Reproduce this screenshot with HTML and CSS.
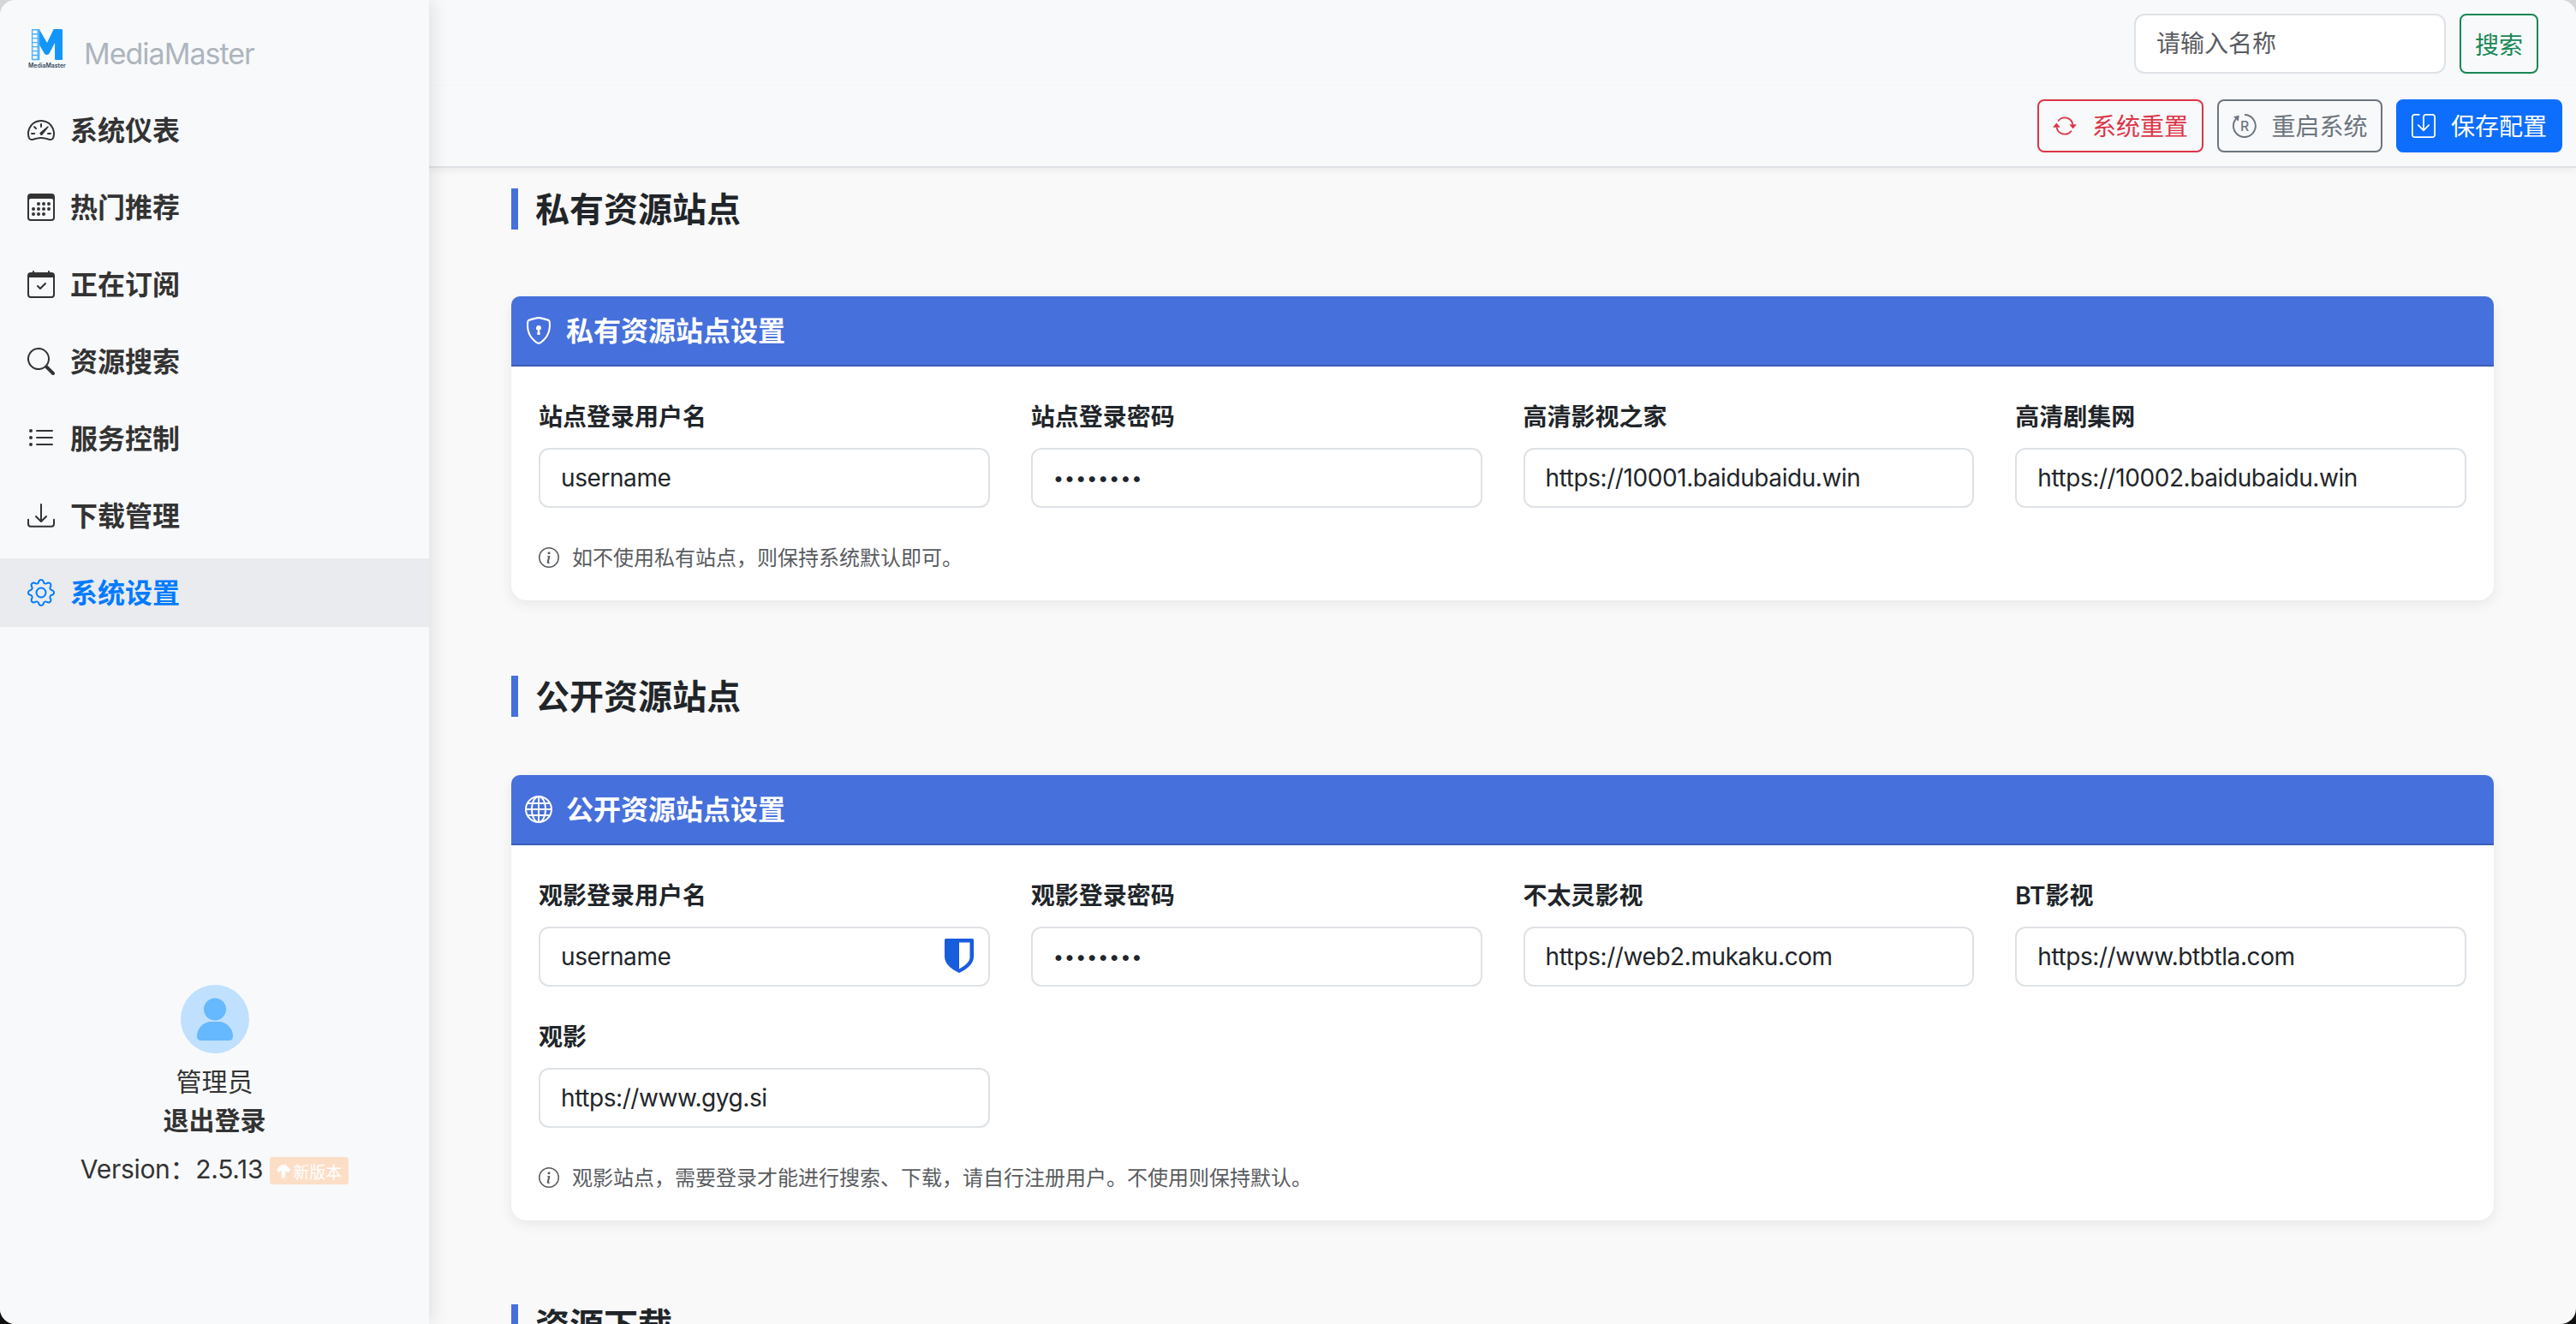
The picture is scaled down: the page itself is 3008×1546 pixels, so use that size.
FILE: index.html
```html
<!DOCTYPE html>
<html lang="zh-CN">
<head>
  <meta charset="UTF-8">
  <meta name="viewport" content="width=device-width, initial-scale=1.0">
  <title>系统设置 - MediaMaster</title>
  <link rel="stylesheet" href="styles.css">
</head>
<body>
  <div class="layout">
    <!-- 侧边栏 -->
    <aside class="sidebar">
      <div class="brand">
        <svg class="brand-logo" viewBox="0 0 48 48">
          <path fill="#1296fb" d="M17 1l8.900 15.300L33.300 1h8.900q1 0 1 1v32.500q0 1-1 1h-6.600q-1 0-1-1V16.300L28.200 28.500q-2.600 2.600-5.200 0L17 18z"/>
          <path fill="none" stroke="#4aaefb" stroke-width="1.300" d="M9.200 1.700H17V35H9.200zM15.500 1.700V35M9.200 6.500h7M9.200 11.200h7M9.200 16h7M9.200 20.700h7M9.200 25.500h7M9.200 30.200h7"/>
          <text class="logo-text" x="4.800" y="44.600" textLength="42" lengthAdjust="spacingAndGlyphs">MediaMaster</text>
        </svg>
        <span class="brand-name">MediaMaster</span>
      </div>
      <nav class="menu">
        <a href="#"><svg class="icon" viewBox="0 0 16 16"><path d="M8 4a.5.5 0 0 1 .5.5V6a.5.5 0 0 1-1 0V4.500A.5.5 0 0 1 8 4M3.732 5.732a.5.5 0 0 1 .707 0l.915.914a.5.5 0 1 1-.708.708l-.914-.915a.5.5 0 0 1 0-.707M2 10a.5.5 0 0 1 .5-.5h1.586a.5.5 0 0 1 0 1H2.500A.5.5 0 0 1 2 10m9.500 0a.5.5 0 0 1 .5-.5h1.500a.5.5 0 0 1 0 1H12a.5.5 0 0 1-.5-.5m.754-4.246a.39.39 0 0 0-.527-.02L7.547 9.310a.91.91 0 1 0 1.302 1.258l3.434-4.297a.39.39 0 0 0-.029-.518z"/><path fill-rule="evenodd" d="M0 10a8 8 0 1 1 15.547 2.661c-.442 1.253-1.845 1.602-2.932 1.250C11.309 13.488 9.475 13 8 13c-1.474 0-3.310.488-4.615.911-1.087.352-2.490.003-2.932-1.250A8 8 0 0 1 0 10m8-7a7 7 0 0 0-6.603 9.329c.203.575.923.876 1.680.630C4.397 12.533 6.358 12 8 12s3.604.532 4.923.960c.757.245 1.477-.056 1.680-.631A7 7 0 0 0 8 3"/></svg><span>系统仪表</span></a>
        <a href="#"><svg class="icon" viewBox="0 0 16 16"><path d="M14 0H2a2 2 0 0 0-2 2v12a2 2 0 0 0 2 2h12a2 2 0 0 0 2-2V2a2 2 0 0 0-2-2M1 3.857C1 3.384 1.448 3 2 3h12c.552 0 1 .384 1 .857v10.286c0 .473-.448.857-1 .857H2c-.552 0-1-.384-1-.857z"/><path d="M6.500 7a1 1 0 1 0 0-2 1 1 0 0 0 0 2m3 0a1 1 0 1 0 0-2 1 1 0 0 0 0 2m3 0a1 1 0 1 0 0-2 1 1 0 0 0 0 2m-9 3a1 1 0 1 0 0-2 1 1 0 0 0 0 2m3 0a1 1 0 1 0 0-2 1 1 0 0 0 0 2m3 0a1 1 0 1 0 0-2 1 1 0 0 0 0 2m3 0a1 1 0 1 0 0-2 1 1 0 0 0 0 2m-9 3a1 1 0 1 0 0-2 1 1 0 0 0 0 2m3 0a1 1 0 1 0 0-2 1 1 0 0 0 0 2m3 0a1 1 0 1 0 0-2 1 1 0 0 0 0 2"/></svg><span>热门推荐</span></a>
        <a href="#"><svg class="icon" viewBox="0 0 16 16"><path d="M10.854 7.146a.5.5 0 0 1 0 .708l-3 3a.5.5 0 0 1-.708 0l-1.500-1.500a.5.5 0 1 1 .708-.708L7.500 9.793l2.646-2.647a.5.5 0 0 1 .708 0"/><path d="M3.500 0a.5.5 0 0 1 .5.5V1h8V.5a.5.5 0 0 1 1 0V1h1a2 2 0 0 1 2 2v11a2 2 0 0 1-2 2H2a2 2 0 0 1-2-2V3a2 2 0 0 1 2-2h1V.5a.5.5 0 0 1 .5-.5M1 4v10a1 1 0 0 0 1 1h12a1 1 0 0 0 1-1V4z"/></svg><span>正在订阅</span></a>
        <a href="#"><svg class="icon" viewBox="0 0 16 16"><path d="M11.742 10.344a6.500 6.500 0 1 0-1.397 1.398h-.001q.044.060.098.115l3.850 3.850a1 1 0 0 0 1.415-1.414l-3.850-3.850a1 1 0 0 0-.115-.1zM12 6.500a5.500 5.500 0 1 1-11 0 5.500 5.500 0 0 1 11 0"/></svg><span>资源搜索</span></a>
        <a href="#"><svg class="icon" viewBox="0 0 16 16"><path fill-rule="evenodd" d="M5 11.500a.5.5 0 0 1 .5-.5h9a.5.5 0 0 1 0 1h-9a.5.5 0 0 1-.5-.5m0-4a.5.5 0 0 1 .5-.5h9a.5.5 0 0 1 0 1h-9a.5.5 0 0 1-.5-.5m0-4a.5.5 0 0 1 .5-.5h9a.5.5 0 0 1 0 1h-9a.5.5 0 0 1-.5-.5m-3 1a1 1 0 1 0 0-2 1 1 0 0 0 0 2m0 4a1 1 0 1 0 0-2 1 1 0 0 0 0 2m0 4a1 1 0 1 0 0-2 1 1 0 0 0 0 2"/></svg><span>服务控制</span></a>
        <a href="#"><svg class="icon" viewBox="0 0 16 16"><path d="M.5 9.900a.5.5 0 0 1 .5.5v2.500a1 1 0 0 0 1 1h12a1 1 0 0 0 1-1v-2.500a.5.5 0 0 1 1 0v2.500a2 2 0 0 1-2 2H2a2 2 0 0 1-2-2v-2.500a.5.5 0 0 1 .5-.5"/><path d="M7.646 11.854a.5.5 0 0 0 .708 0l3-3a.5.5 0 0 0-.708-.708L8.500 10.293V1.500a.5.5 0 0 0-1 0v8.793L5.354 8.146a.5.5 0 1 0-.708.708z"/></svg><span>下载管理</span></a>
        <a href="#" class="active"><svg class="icon" viewBox="0 0 16 16"><path d="M8 4.754a3.246 3.246 0 1 0 0 6.492 3.246 3.246 0 0 0 0-6.492M5.754 8a2.246 2.246 0 1 1 4.492 0 2.246 2.246 0 0 1-4.492 0"/><path d="M9.796 1.343c-.527-1.790-3.065-1.790-3.592 0l-.094.319a.873.873 0 0 1-1.255.520l-.292-.160c-1.640-.892-3.433.902-2.540 2.541l.159.292a.873.873 0 0 1-.520 1.255l-.319.094c-1.790.527-1.790 3.065 0 3.592l.319.094a.873.873 0 0 1 .520 1.255l-.160.292c-.892 1.640.901 3.434 2.541 2.540l.292-.159a.873.873 0 0 1 1.255.520l.094.319c.527 1.790 3.065 1.790 3.592 0l.094-.319a.873.873 0 0 1 1.255-.520l.292.160c1.640.893 3.434-.902 2.540-2.541l-.159-.292a.873.873 0 0 1 .520-1.255l.319-.094c1.790-.527 1.790-3.065 0-3.592l-.319-.094a.873.873 0 0 1-.520-1.255l.160-.292c.893-1.640-.902-3.433-2.541-2.540l-.292.159a.873.873 0 0 1-1.255-.520zm-2.633.283c.246-.835 1.428-.835 1.674 0l.094.319a1.873 1.873 0 0 0 2.693 1.115l.291-.160c.764-.415 1.600.420 1.184 1.185l-.159.292a1.873 1.873 0 0 0 1.116 2.692l.318.094c.835.246.835 1.428 0 1.674l-.319.094a1.873 1.873 0 0 0-1.115 2.693l.160.291c.415.764-.420 1.600-1.185 1.184l-.291-.159a1.873 1.873 0 0 0-2.693 1.116l-.094.318c-.246.835-1.428.835-1.674 0l-.094-.319a1.873 1.873 0 0 0-2.692-1.115l-.292.160c-.764.415-1.600-.420-1.184-1.185l.159-.291A1.873 1.873 0 0 0 1.945 8.930l-.319-.094c-.835-.246-.835-1.428 0-1.674l.319-.094A1.873 1.873 0 0 0 3.060 4.377l-.160-.292c-.415-.764.420-1.600 1.185-1.184l.292.159a1.873 1.873 0 0 0 2.692-1.115z"/></svg><span>系统设置</span></a>
      </nav>
      <div class="user">
        <svg class="avatar" viewBox="0 0 80 80">
          <circle cx="40" cy="40" r="40" fill="#bfe0ff"/>
          <circle cx="40" cy="28.500" r="13" fill="#66b8ff"/>
          <path fill="#66b8ff" d="M36 43h8c10 0 17 8 17 17q0 5-5 5H24q-5 0-5-5c0-9 7-17 17-17z"/>
        </svg>
        <div class="user-name">管理员</div>
        <a href="#" class="logout">退出登录</a>
        <div class="version">
          <span class="version-text">Version：2.5.13</span>
          <span class="badge"><svg class="badge-icon" viewBox="0 0 16 16"><path d="M8 2.500L2 8.500M8 2.500l6 6M8 3v12.500" fill="none" stroke="#fff" stroke-width="4"/></svg>新版本</span>
        </div>
      </div>
    </aside>

    <main class="main">
      <header class="header">
        <form class="search-bar">
          <input type="text" class="form-control search-input" placeholder="请输入名称">
          <button type="button" class="btn btn-search">搜索</button>
        </form>
        <div class="toolbar">
          <button type="button" class="btn btn-danger"><svg class="btn-icon" viewBox="0 0 16 16"><path d="M11.534 7h3.932a.25.25 0 0 1 .192.410l-1.966 2.360a.25.25 0 0 1-.384 0l-1.966-2.360a.25.25 0 0 1 .192-.410m-11 2h3.932a.25.25 0 0 0 .192-.410L2.692 6.230a.25.25 0 0 0-.384 0L.342 8.590A.25.25 0 0 0 .534 9"/><path fill-rule="evenodd" d="M8 3c-1.552 0-2.940.707-3.857 1.818a.5.5 0 1 1-.771-.636A6.002 6.002 0 0 1 13.917 7H12.900A5 5 0 0 0 8 3M3.100 9a5.002 5.002 0 0 0 8.757 2.182.5.5 0 1 1 .771.636A6.002 6.002 0 0 1 2.083 9z"/></svg><span>系统重置</span></button>
          <button type="button" class="btn btn-secondary"><svg class="btn-icon" viewBox="0 0 16 16"><path d="M8 .600A7.400 7.400 0 1 1 2.300 3.200" fill="none" stroke="currentColor" stroke-width="1.100"/><path d="M.600 1.900 4.400 1 3.900 5z"/><text class="icon-letter" x="5.200" y="11.200">R</text></svg><span>重启系统</span></button>
          <button type="button" class="btn btn-primary"><svg class="btn-icon" viewBox="0 0 16 16"><path d="M5 .5H2A1.500 1.500 0 0 0 .5 2v12A1.500 1.500 0 0 0 2 15.500h12a1.500 1.500 0 0 0 1.500-1.500V2A1.500 1.500 0 0 0 14 .5H9.500a1.500 1.500 0 0 0-1.500 1.500v8.800M4.500 7.500 8 11l3.500-3.500" fill="none" stroke="currentColor" stroke-linecap="round"/></svg><span>保存配置</span></button>
        </div>
      </header>

      <div class="content">
        <h2 class="section-title">私有资源站点</h2>
        <section class="card card-private">
          <div class="card-header"><svg class="icon" viewBox="0 0 16 16"><path d="M5.338 1.590a61 61 0 0 0-2.837.856.480.480 0 0 0-.328.390c-.554 4.157.726 7.190 2.253 9.188a10.700 10.700 0 0 0 2.287 2.233c.346.244.652.420.893.533q.180.085.293.118a1 1 0 0 0 .101.025 1 1 0 0 0 .100-.025q.114-.034.294-.118c.240-.113.547-.290.893-.533a10.700 10.700 0 0 0 2.287-2.233c1.527-1.997 2.807-5.031 2.253-9.188a.480.480 0 0 0-.328-.390c-.651-.213-1.750-.560-2.837-.855C9.552 1.290 8.531 1.067 8 1.067c-.530 0-1.552.223-2.662.524zM5.072.560C6.157.265 7.310 0 8 0s1.843.265 2.928.560c1.110.300 2.229.655 2.887.870a1.540 1.540 0 0 1 1.044 1.262c.596 4.477-.787 7.795-2.465 9.990a11.800 11.800 0 0 1-2.517 2.453 7 7 0 0 1-1.048.625c-.280.132-.581.240-.829.240s-.548-.108-.829-.240a7 7 0 0 1-1.048-.625 11.800 11.800 0 0 1-2.517-2.453C1.928 10.487.545 7.169 1.141 2.692A1.540 1.540 0 0 1 2.185 1.430 63 63 0 0 1 5.072.560"/><path d="M9.500 6.500a1.500 1.500 0 0 1-1 1.415l.385 1.990a.5.5 0 0 1-.491.595h-.788a.5.5 0 0 1-.490-.595l.384-1.990a1.500 1.500 0 1 1 2-1.415"/></svg><span>私有资源站点设置</span></div>
          <div class="card-body">
            <div class="form-grid">
              <div class="field"><label class="form-label">站点登录用户名</label><input type="text" class="form-control" value="username"></div>
              <div class="field"><label class="form-label">站点登录密码</label><input type="password" class="form-control" value="password"></div>
              <div class="field"><label class="form-label">高清影视之家</label><input type="text" class="form-control" value="https://10001.baidubaidu.win"></div>
              <div class="field"><label class="form-label">高清剧集网</label><input type="text" class="form-control" value="https://10002.baidubaidu.win"></div>
            </div>
            <div class="form-text"><svg class="info-icon" viewBox="0 0 16 16"><path d="M8 15A7 7 0 1 1 8 1a7 7 0 0 1 0 14m0 1A8 8 0 1 0 8 0a8 8 0 0 0 0 16"/><path d="m8.930 6.588-2.290.287-.082.380.450.083c.294.070.352.176.288.469l-.738 3.468c-.194.897.105 1.319.808 1.319.545 0 1.178-.252 1.465-.598l.088-.416c-.200.176-.492.246-.686.246-.275 0-.375-.193-.304-.533zM9 4.500a1 1 0 1 1-2 0 1 1 0 0 1 2 0"/></svg><span>如不使用私有站点，则保持系统默认即可。</span></div>
          </div>
        </section>

        <h2 class="section-title">公开资源站点</h2>
        <section class="card card-public">
          <div class="card-header"><svg class="icon" viewBox="0 0 16 16"><path d="M0 8a8 8 0 1 1 16 0A8 8 0 0 1 0 8m7.500-6.923c-.670.204-1.335.820-1.887 1.855A8 8 0 0 0 5.145 4H7.500zM4.090 4a9.300 9.300 0 0 1 .640-1.539 7 7 0 0 1 .597-.933A7.030 7.030 0 0 0 2.255 4zm-.582 3.500c.030-.877.138-1.718.312-2.500H1.674a7 7 0 0 0-.656 2.500zM4.847 5a12.500 12.500 0 0 0-.338 2.500H7.500V5zM8.500 5v2.500h2.990a12.500 12.500 0 0 0-.337-2.500zM4.510 8.500a12.500 12.500 0 0 0 .337 2.500H7.500V8.500zm3.990 0V11h2.653c.187-.765.306-1.608.338-2.500zM5.145 12q.208.580.468 1.068c.552 1.035 1.218 1.650 1.887 1.855V12zm.182 2.472a7 7 0 0 1-.597-.933A9.300 9.300 0 0 1 4.090 12H2.255a7 7 0 0 0 3.072 2.472M3.820 11a13.700 13.700 0 0 1-.312-2.500h-2.490c.062.890.291 1.733.656 2.500zm6.853 3.472A7 7 0 0 0 13.745 12H11.910a9.300 9.300 0 0 1-.640 1.539 7 7 0 0 1-.597.933M8.500 12v2.923c.670-.204 1.335-.820 1.887-1.855q.260-.487.468-1.068zm3.680-1h2.146c.365-.767.594-1.610.656-2.500h-2.490a13.700 13.700 0 0 1-.312 2.500m2.802-3.500a7 7 0 0 0-.656-2.500H12.180c.174.782.282 1.623.312 2.500zM11.270 2.461c.247.464.462.980.640 1.539h1.835a7 7 0 0 0-3.072-2.472c.218.284.418.598.597.933M10.855 4a8 8 0 0 0-.468-1.068C9.835 1.897 9.170 1.282 8.500 1.077V4z"/></svg><span>公开资源站点设置</span></div>
          <div class="card-body">
            <div class="form-grid">
              <div class="field"><label class="form-label">观影登录用户名</label><input type="text" class="form-control" value="username"><svg class="shield" viewBox="0 0 34 40"><path fill="#175ddc" d="M1.500 0h31Q34 0 34 1.500V21c0 9-9 15.500-17 19C9 36.500 0 30 0 21V1.500Q0 0 1.500 0z"/><path fill="#fff" d="M17 4.500h12.500V22c0 5-6 10-12.500 13.500z"/></svg></div>
              <div class="field"><label class="form-label">观影登录密码</label><input type="password" class="form-control" value="password"></div>
              <div class="field"><label class="form-label">不太灵影视</label><input type="text" class="form-control" value="https://web2.mukaku.com"></div>
              <div class="field"><label class="form-label">BT影视</label><input type="text" class="form-control" value="https://www.btbtla.com"></div>
              <div class="field"><label class="form-label">观影</label><input type="text" class="form-control" value="https://www.gyg.si"></div>
            </div>
            <div class="form-text"><svg class="info-icon" viewBox="0 0 16 16"><path d="M8 15A7 7 0 1 1 8 1a7 7 0 0 1 0 14m0 1A8 8 0 1 0 8 0a8 8 0 0 0 0 16"/><path d="m8.930 6.588-2.290.287-.082.380.450.083c.294.070.352.176.288.469l-.738 3.468c-.194.897.105 1.319.808 1.319.545 0 1.178-.252 1.465-.598l.088-.416c-.200.176-.492.246-.686.246-.275 0-.375-.193-.304-.533zM9 4.500a1 1 0 1 1-2 0 1 1 0 0 1 2 0"/></svg><span>观影站点，需要登录才能进行搜索、下载，请自行注册用户。不使用则保持默认。</span></div>
          </div>
        </section>

        <h2 class="section-title">资源下载</h2>
      </div>
    </main>
  </div>
</body>
</html>
```
FILE: styles.css
```css
* {
  box-sizing: border-box;
}

html {
  background: linear-gradient(#d5d6d9 50%, #111 50%);
}

body {
  margin: 0;
  height: 1546px;
  overflow: hidden;
  font-family: Inter, "Noto Sans CJK SC", sans-serif;
  font-size: 28px;
  color: #212529;
}

.layout {
  display: flex;
  height: 1546px;
  overflow: hidden;
  background: #f9f9f9;
  border-radius: 18px;
}

svg {
  fill: currentColor;
  flex-shrink: 0;
}

/* 侧边栏 */
.sidebar {
  display: flex;
  flex-direction: column;
  width: 501px;
  flex-shrink: 0;
  background: #f8f9fb;
  box-shadow: 4px 0 20px rgba(0, 0, 0, 0.1);
  z-index: 2;
}

.brand {
  display: flex;
  height: 112px;
  padding: 33px 0 0 28px;
}

.brand-logo {
  width: 50px;
  height: 50px;
}

.logo-text {
  font-size: 7px;
  font-weight: 600;
  fill: #34495e;
}

.brand-name {
  margin-left: 20px;
  font-size: 34px;
  line-height: 60px;
  letter-spacing: -1px;
  color: #adb5bd;
}

.menu {
  display: flex;
  flex-direction: column;
  gap: 10px;
}

.menu a {
  display: flex;
  align-items: center;
  height: 80px;
  padding-left: 32px;
  font-size: 32px;
  font-weight: 600;
  color: #333;
  text-decoration: none;
}

.menu a span,
.card-header span,
.form-text span {
  padding-bottom: 4px;
}

.menu a.active {
  background: #e9ebef;
  color: #007bff;
}

.icon {
  width: 32px;
  height: 32px;
  margin-right: 18px;
}

.user {
  display: flex;
  flex-direction: column;
  align-items: center;
  margin-top: auto;
  height: 396px;
  font-size: 30px;
  color: #333;
}

.avatar {
  width: 80px;
  height: 80px;
  margin-bottom: 11px;
}

.user-name,
.logout {
  line-height: 45px;
}

.logout {
  font-weight: 600;
  color: #333;
  text-decoration: none;
}

.version {
  display: flex;
  align-items: center;
  height: 50px;
  margin-top: 11px;
}

.version-text {
  padding-bottom: 9px;
  letter-spacing: -0.3px;
}

.badge {
  display: flex;
  align-items: center;
  width: 92px;
  height: 32px;
  margin-left: 8px;
  padding-left: 7px;
  border-radius: 3px;
  background: #fcdec7;
  color: #fff;
  font-size: 19px;
}

.badge-icon {
  width: 18px;
  height: 18px;
  margin-right: 2px;
}

/* 顶部 */
.main {
  flex: 1;
  min-width: 0;
}

.header {
  height: 196px;
  background: #f8f9fb;
  border-bottom: 2px solid #dee2e6;
  box-shadow: 0 4px 8px rgba(0, 0, 0, 0.05);
}

.search-bar {
  display: flex;
  justify-content: flex-end;
  gap: 16px;
  height: 100px;
  padding: 16px 44px 0 0;
  border-bottom: 1px solid #f5f6f9;
}

.toolbar {
  display: flex;
  justify-content: flex-end;
  gap: 16px;
  padding: 16px 16px 0 0;
}

.form-control {
  display: block;
  width: 100%;
  height: 70px;
  padding: 0 24px;
  border: 2px solid #dee2e6;
  border-radius: 12px;
  background: #fff;
  color: #212529;
  font-family: inherit;
  font-size: 28px;
  letter-spacing: -0.42px;
}

.form-control[type="password"] {
  font-size: 22px;
  letter-spacing: 0.7px;
}

.form-control::placeholder {
  color: #595c5f;
  letter-spacing: 0;
}

.search-input {
  width: 364px;
}

.btn {
  display: flex;
  align-items: center;
  height: 62px;
  padding: 0 16px;
  border: 2px solid;
  border-radius: 8px;
  background: transparent;
  font-family: inherit;
  font-size: 28px;
}

.btn span {
  padding-bottom: 2px;
}

.btn-icon {
  width: 28px;
  height: 28px;
  margin-right: 17.5px;
}

.icon-letter {
  font-size: 9px;
  font-weight: 500;
}

.btn-search {
  height: 70px;
  color: #198754;
}

.btn-danger {
  color: #dc3545;
}

.btn-secondary {
  color: #6c757d;
}

.btn-primary {
  background: #0d6efd;
  border-color: #0d6efd;
  color: #fff;
}

/* 内容 */
.content {
  padding: 24px 96px 0;
}

.section-title {
  height: 48px;
  margin: 0;
  padding-left: 20px;
  border-left: 8px solid #4670db;
  font-size: 40px;
  font-weight: 600;
  line-height: 50px;
}

.card {
  border-radius: 18px;
  background: #fff;
  box-shadow: 0 4px 16px rgba(0, 0, 0, 0.08);
}

.card-private {
  margin: 78px 0 88px;
}

.card-public {
  margin: 68px 0 98px;
}

.card-header {
  display: flex;
  align-items: center;
  height: 82px;
  padding-left: 16px;
  border-bottom: 2px solid #3b5cb8;
  border-radius: 10px 10px 0 0;
  background: #4670db;
  color: #fff;
  font-size: 32px;
  font-weight: 600;
}

.card-header .icon {
  margin-right: 16px;
}

.card-body {
  padding: 37px 32px 32px;
}

.form-grid {
  display: grid;
  grid-template-columns: repeat(4, 1fr);
  gap: 37px 48px;
}

.field {
  position: relative;
}

.form-label {
  display: block;
  height: 42px;
  margin-bottom: 16px;
  line-height: 44px;
  font-weight: 600;
}

.shield {
  position: absolute;
  right: 19px;
  bottom: 16px;
  width: 34px;
  height: 40px;
}

.form-text {
  display: flex;
  align-items: center;
  height: 36px;
  margin-top: 40px;
  font-size: 24px;
  color: #595c5f;
}

.info-icon {
  width: 24px;
  height: 24px;
  margin-right: 15px;
}
```
